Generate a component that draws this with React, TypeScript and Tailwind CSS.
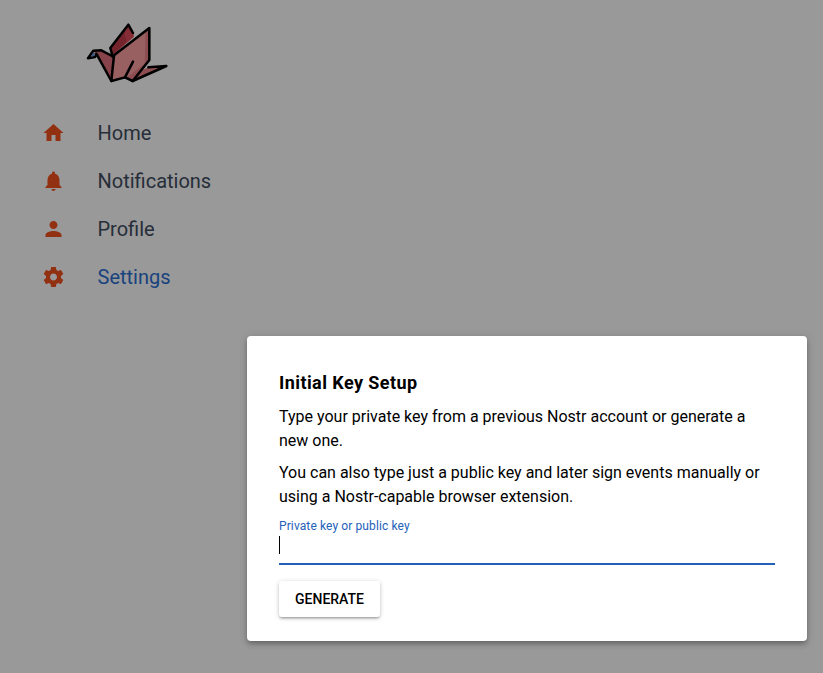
import React from "react";

const navItems = [
  { label: "Home", active: false, path: "M10 20v-6h4v6h5v-8h3L12 3 2 12h3v8z" },
  {
    label: "Notifications",
    active: false,
    path: "M12 22c1.1 0 2-.9 2-2h-4c0 1.1.89 2 2 2zm6-6v-5c0-3.07-1.64-5.64-4.5-6.32V4c0-.83-.67-1.5-1.5-1.5s-1.5.67-1.5 1.5v.68C7.63 5.36 6 7.92 6 11v5l-2 2v1h16v-1l-2-2z",
  },
  {
    label: "Profile",
    active: false,
    path: "M12 12c2.21 0 4-1.79 4-4s-1.79-4-4-4-4 1.79-4 4 1.79 4 4 4zm0 2c-2.67 0-8 1.34-8 4v2h16v-2c0-2.66-5.33-4-8-4z",
  },
  {
    label: "Settings",
    active: true,
    path: "M19.43 12.98c.04-.32.07-.64.07-.98s-.03-.66-.07-.98l2.11-1.65c.19-.15.24-.42.12-.64l-2-3.46c-.12-.22-.39-.3-.61-.22l-2.49 1c-.52-.4-1.08-.73-1.69-.98l-.38-2.65C14.46 2.18 14.25 2 14 2h-4c-.25 0-.46.18-.49.42l-.38 2.65c-.61.25-1.17.59-1.69.98l-2.49-1c-.23-.09-.49 0-.61.22l-2 3.46c-.13.22-.07.49.12.64l2.11 1.65c-.04.32-.07.65-.07.98s.03.66.07.98l-2.11 1.65c-.19.15-.24.42-.12.64l2 3.46c.12.22.39.3.61.22l2.49-1c.52.4 1.08.73 1.69.98l.38 2.65c.03.24.24.42.49.42h4c.25 0 .46-.18.49-.42l.38-2.65c.61-.25 1.17-.59 1.69-.98l2.49 1c.23.09.49 0 .61-.22l2-3.46c.12-.22.07-.49-.12-.64l-2.11-1.65zM12 15.5c-1.93 0-3.5-1.57-3.5-3.5s1.57-3.5 3.5-3.5 3.5 1.57 3.5 3.5-1.57 3.5-3.5 3.5z",
  },
];

function CraneLogo() {
  return (
    <svg viewBox="0 0 285 225" className="h-[75px] w-[95px]" strokeLinejoin="round" strokeLinecap="round">
      <path d="M91 99 145 29 160 54 162 65 100 119 98 125Z" fill="#e04a5a" />
      <path d="M91 99 132 45 139 80 101 116Z" fill="#c23c4b" />
      <path d="M40 107 64 105 102 127 94 198Z" fill="#f0848a" />
      <path d="M50 112 64 105 102 127 94 198Z" fill="#e0707a" />
      <path d="M102 121 208 39V139L158 198 135 187 94 198Z" fill="#ffa0a4" />
      <path d="M197 49 208 39V139L158 198 141 187 194 146Z" fill="#ec8088" />
      <path d="M205 157 259 153 158 198 187 165Z" fill="#ec8088" />
      <g fill="none" stroke="#000" strokeWidth="7.5">
        <path d="M98 125 91 99 145 29 159 54" />
        <path d="M102 121 208 39V135L158 198 135 187 94 198Z" />
        <path d="M102 126 64 106 40 107 24 130 45 126 49 116 94 198" />
        <path d="M135 187 159 140" />
        <path d="M205 157 259 153 158 198" />
      </g>
      <path d="M32 125 40 113 46 116 43 123Z" fill="#6c94d8" />
    </svg>
  );
}

export default function App() {
  return (
    <div className="relative h-[673px] w-[823px] overflow-hidden bg-white font-[Roboto,sans-serif]">
      <aside className="w-[247px] pt-[15px]">
        <div className="pl-20">
          <CraneLogo />
        </div>
        <nav className="pt-[19px]">
          {navItems.map((item) => (
            <a key={item.label} className="flex h-12 items-center pl-[41px]">
              <svg viewBox="0 0 24 24" className="h-6 w-[25px] fill-[#f4511e]">
                <path d={item.path} />
              </svg>
              <span
                className={
                  item.active
                    ? "pl-[31.5px] text-xl leading-6 text-[#2b70d2]"
                    : "pl-[31.5px] text-xl leading-6 text-[#3f4d61]"
                }
              >
                {item.label}
              </span>
            </a>
          ))}
        </nav>
      </aside>

      <div className="absolute inset-0 flex items-end justify-end bg-black/40 pr-4 pb-8">
        <section className="h-[305px] w-[560px] rounded bg-white px-8 pt-8 text-black shadow-[0_2px_4px_-1px_rgba(0,0,0,0.2),0_4px_5px_rgba(0,0,0,0.14),0_1px_10px_rgba(0,0,0,0.12)]">
          <h1 className="h-8 text-lg leading-[30px] font-bold tracking-[0.43px]">Initial Key Setup</h1>
          <p className="mt-[5px] text-base leading-6">
            Type your private key from a previous Nostr account or generate a
            <br />
            new one.
          </p>
          <p className="mt-2 text-base leading-6">
            You can also type just a public key and later sign events manually or
            <br />
            using a Nostr-capable browser extension.
          </p>
          <div className="mt-[7px] h-[49px] border-b-2 border-[#2361b9] pt-0.5">
            <div className="h-5 text-xs leading-4 tracking-[0.11px] text-[#2361b9]">Private key or public key</div>
            <div className="mt-[-2px] h-[18px] w-px bg-black" />
          </div>
          <button className="mt-4 h-9 w-[101px] rounded-[3px] bg-white text-sm font-medium shadow-[0_1px_5px_rgba(0,0,0,0.2),0_2px_2px_rgba(0,0,0,0.14),0_3px_1px_-2px_rgba(0,0,0,0.12)]">
            GENERATE
          </button>
        </section>
      </div>
    </div>
  );
}
